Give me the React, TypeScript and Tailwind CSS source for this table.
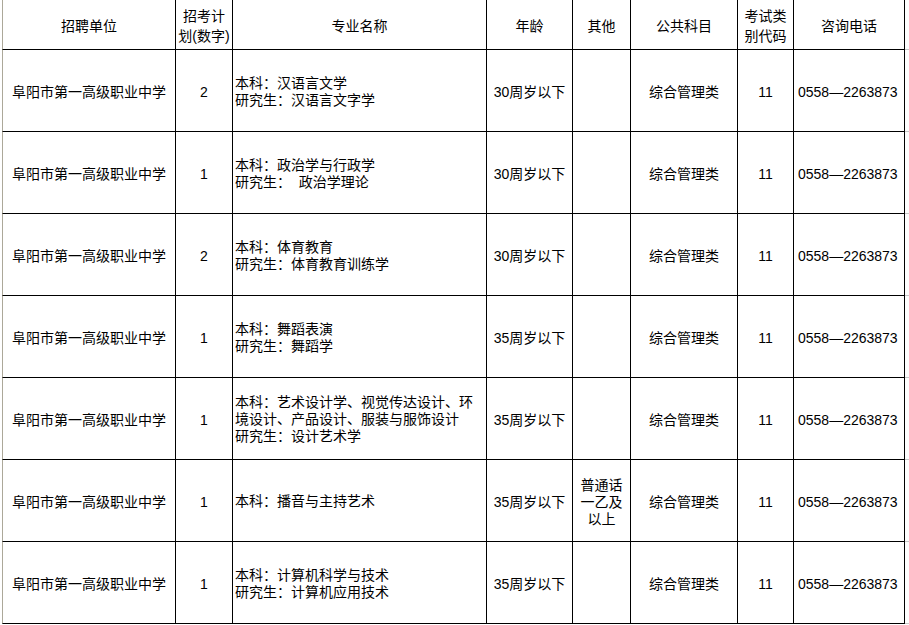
import React from "react";

const FONT = '"Liberation Sans", Arial, "Noto Sans CJK SC", sans-serif';

type Row = {
  count: string;
  major: React.ReactNode;
  age: string;
  other?: string;
};

const rows: Row[] = [
  {
    count: "2",
    major: (
      <>
        <div>本科：汉语言文学</div>
        <div>研究生：汉语言文字学</div>
      </>
    ),
    age: "30周岁以下",
  },
  {
    count: "1",
    major: (
      <>
        <div>本科：政治学与行政学</div>
        <div className="whitespace-pre">研究生：  政治学理论</div>
      </>
    ),
    age: "30周岁以下",
  },
  {
    count: "2",
    major: (
      <>
        <div>本科：体育教育</div>
        <div>研究生：体育教育训练学</div>
      </>
    ),
    age: "30周岁以下",
  },
  {
    count: "1",
    major: (
      <>
        <div>本科：舞蹈表演</div>
        <div>研究生：舞蹈学</div>
      </>
    ),
    age: "35周岁以下",
  },
  {
    count: "1",
    major: (
      <>
        <div>本科：艺术设计学、视觉传达设计、环</div>
        <div>境设计、产品设计、服装与服饰设计</div>
        <div>研究生：设计艺术学</div>
      </>
    ),
    age: "35周岁以下",
  },
  {
    count: "1",
    major: (
      <>
        <div>本科：播音与主持艺术</div>
      </>
    ),
    age: "35周岁以下",
    other: "普通话一乙及以上",
  },
  {
    count: "1",
    major: (
      <>
        <div>本科：计算机科学与技术</div>
        <div>研究生：计算机应用技术</div>
      </>
    ),
    age: "35周岁以下",
  },
];

const cell =
  "flex items-center justify-center text-center border-r border-b border-black px-[2px]";

export default function App() {
  return (
    <div
      className="w-[909px] h-[625px] overflow-hidden bg-white text-black text-[14px]"
      style={{ fontFamily: FONT }}
    >
      <div className="ml-[2px] grid grid-cols-[174px_57px_254px_86px_58px_107px_56px_111px_5px]">
        {/* Header */}
        <div className={`${cell} h-[50px] pt-[2px] border-l border-l-[#aca899] leading-[20px]`}>招聘单位</div>
        <div className={`${cell} h-[50px] pt-[2px] leading-[20px]`}>招考计划(数字)</div>
        <div className={`${cell} h-[50px] pt-[2px] leading-[20px]`}>专业名称</div>
        <div className={`${cell} h-[50px] pt-[2px] leading-[20px]`}>年龄</div>
        <div className={`${cell} h-[50px] pt-[2px] leading-[20px]`}>其他</div>
        <div className={`${cell} h-[50px] pt-[2px] leading-[20px]`}>公共科目</div>
        <div className={`${cell} h-[50px] pt-[2px] leading-[20px]`}>考试类别代码</div>
        <div className={`${cell} h-[50px] pt-[2px] leading-[20px]`}>咨询电话</div>
        <div className="h-[50px] border-b border-b-[#c8c8c8]" />

        {rows.map((r, i) => (
          <React.Fragment key={i}>
            <div className={`${cell} h-[82px] pt-[3px] border-l border-l-[#aca899] leading-[17px]`}>
              阜阳市第一高级职业中学
            </div>
            <div className={`${cell} h-[82px] pt-[3px] leading-[17px]`}>{r.count}</div>
            <div className="flex flex-col justify-center items-start text-left h-[82px] pt-[2px] border-r border-b border-black pl-[2px] pr-[1px] leading-[17px]">
              {r.major}
            </div>
            <div className={`${cell} h-[82px] pt-[3px] leading-[17px]`}>{r.age}</div>
            <div className={`${cell} h-[82px] pt-[3px] leading-[17px]`}>{r.other ?? ""}</div>
            <div className={`${cell} h-[82px] pt-[3px] leading-[17px]`}>综合管理类</div>
            <div className={`${cell} h-[82px] pt-[3px] leading-[17px]`}>11</div>
            <div className="flex items-center justify-start h-[82px] pt-[3px] pl-[4px] border-r border-b border-black leading-[17px] whitespace-nowrap">
              0558—2263873
            </div>
            <div className="h-[82px] border-b border-b-[#c8c8c8]" />
          </React.Fragment>
        ))}
      </div>
    </div>
  );
}
